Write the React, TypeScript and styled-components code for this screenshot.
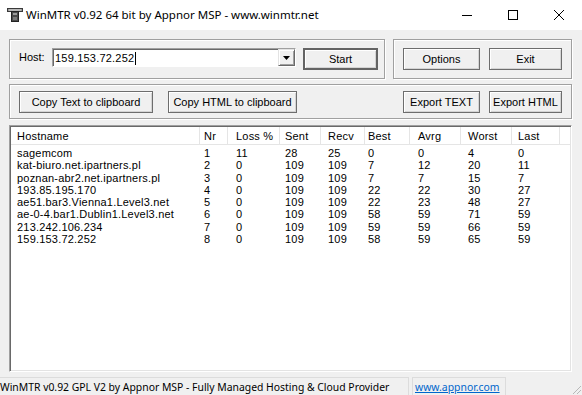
import styled, { createGlobalStyle } from "styled-components";

const GlobalStyle = createGlobalStyle`
  html, body { margin: 0; padding: 0; background: #f0f0f0; }
  * { box-sizing: border-box; }
`;

const columns = [
  { title: "Hostname", width: 189, pad: 6 },
  { title: "Nr", width: 28, pad: 4 },
  { title: "Loss %", width: 52, pad: 8 },
  { title: "Sent", width: 41, pad: 5 },
  { title: "Recv", width: 44, pad: 7 },
  { title: "Best", width: 45, pad: 3 },
  { title: "Avrg", width: 51, pad: 8 },
  { title: "Worst", width: 51, pad: 7 },
  { title: "Last", width: 48, pad: 6 },
];

const hops: (string | number)[][] = [
  ["sagemcom", 1, 11, 28, 25, 0, 0, 4, 0],
  ["kat-biuro.net.ipartners.pl", 2, 0, 109, 109, 7, 12, 20, 11],
  ["poznan-abr2.net.ipartners.pl", 3, 0, 109, 109, 7, 7, 15, 7],
  ["193.85.195.170", 4, 0, 109, 109, 22, 22, 30, 27],
  ["ae51.bar3.Vienna1.Level3.net", 5, 0, 109, 109, 22, 23, 48, 27],
  ["ae-0-4.bar1.Dublin1.Level3.net", 6, 0, 109, 109, 58, 59, 71, 59],
  ["213.242.106.234", 7, 0, 109, 109, 59, 59, 66, 59],
  ["159.153.72.252", 8, 0, 109, 109, 58, 59, 65, 59],
];

const gridCols = columns.map((c) => c.width + "px").join(" ") + " 1fr";

const App = () => {
  return (
    <Window>
      <GlobalStyle />
      <TitleBar>
        <AppIcon width="16" height="16" viewBox="0 0 16 16">
          <rect x="0.5" y="1.5" width="15" height="3" fill="#9a9a9a" stroke="#3a3a3a" />
          <rect x="2" y="2.5" width="12" height="1" fill="#d8d8d8" />
          <rect x="4.5" y="4.5" width="7" height="10" fill="#4a4a4a" stroke="#222" />
          <rect x="6" y="6" width="4" height="2" fill="#9c9c9c" />
          <rect x="6" y="10" width="4" height="3" fill="#7a7a7a" />
        </AppIcon>
        <Title>WinMTR v0.92 64 bit by Appnor MSP - www.winmtr.net</Title>
        <Controls>
          <CtrlButton>
            <svg width="10" height="10" viewBox="0 0 10 10">
              <line x1="0" y1="5.5" x2="10" y2="5.5" stroke="#000" />
            </svg>
          </CtrlButton>
          <CtrlButton>
            <svg width="10" height="10" viewBox="0 0 10 10">
              <rect x="0.5" y="0.5" width="9" height="9" fill="none" stroke="#000" />
            </svg>
          </CtrlButton>
          <CtrlButton>
            <svg width="10" height="10" viewBox="0 0 10 10">
              <path d="M0 0 L10 10 M10 0 L0 10" stroke="#000" strokeWidth="1" />
            </svg>
          </CtrlButton>
        </Controls>
      </TitleBar>

      <Client>
        <TopRow>
          <GroupBox $width={376} $height={40}>
            <Label>Host:</Label>
            <Combo>
              <ComboText>
                159.153.72.252
                <Caret />
              </ComboText>
              <DropButton>
                <svg width="7" height="4" viewBox="0 0 7 4">
                  <path d="M0 0 H7 L3.5 4 Z" fill="#000" />
                </svg>
              </DropButton>
            </Combo>
            <Button $width={75} $default>Start</Button>
          </GroupBox>
          <GroupBox $width={179} $height={40}>
            <Button $width={77}>Options</Button>
            <Button $width={73}>Exit</Button>
          </GroupBox>
        </TopRow>

        <ActionBox>
          <Button $width={134}>Copy Text to clipboard</Button>
          <Button $width={129}>Copy HTML to clipboard</Button>
          <Spacer />
          <Button $width={77}>Export TEXT</Button>
          <Button $width={73}>Export HTML</Button>
        </ActionBox>

        <ListView>
          <HeaderRow>
            {columns.map((c) => (
              <HeaderCell key={c.title} $pad={c.pad}>
                {c.title}
              </HeaderCell>
            ))}
            <HeaderFiller />
          </HeaderRow>
          <Body>
            {hops.map((row) => (
              <Row key={String(row[0])}>
                {row.map((v, i) => (
                  <Cell key={i} $pad={columns[i].pad}>
                    {v}
                  </Cell>
                ))}
              </Row>
            ))}
          </Body>
        </ListView>
      </Client>

      <StatusBar>
        <Pane $width={409}>
          WinMTR v0.92 GPL V2 by Appnor MSP - Fully Managed Hosting &amp; Cloud Provider
        </Pane>
        <Pane $width={94}>
          <Link>www.appnor.com</Link>
        </Pane>
        <Grip width="12" height="12" viewBox="0 0 12 12">
          <path d="M11 3 L3 11 M11 7 L7 11" stroke="#b8b8b8" strokeWidth="1" />
        </Grip>
      </StatusBar>
    </Window>
  );
};

const Window = styled.div`
  width: 582px;
  height: 395px;
  display: flex;
  flex-direction: column;
  background: #f0f0f0;
  overflow: hidden;
  font-family: "Liberation Sans", Arial, sans-serif;
  font-size: 11px;
  color: #000;
`;

const TitleBar = styled.div`
  height: 30px;
  background: #fff;
  display: flex;
  align-items: center;
  padding-left: 7px;
`;

const AppIcon = styled.svg`
  flex: none;
`;

const Title = styled.div`
  margin-left: 3px;
  font-family: "Noto Sans", "Liberation Sans", sans-serif;
  font-size: 11.5px;
  color: #000;
  flex: 1;
  padding-bottom: 1px;
`;

const Controls = styled.div`
  display: flex;
  height: 30px;
`;

const CtrlButton = styled.div`
  width: 46px;
  height: 30px;
  display: flex;
  align-items: center;
  justify-content: center;
`;

const Client = styled.div`
  flex: 1;
  display: flex;
  flex-direction: column;
  padding: 9px 10px 0 9px;
`;

const TopRow = styled.div`
  display: flex;
  gap: 8px;
`;

const GroupBox = styled.div<{ $width: number; $height: number }>`
  width: ${(p) => p.$width}px;
  height: ${(p) => p.$height}px;
  border: 1px solid #a0a0a0;
  box-shadow: inset 1px 1px 0 #fff, 1px 1px 0 #fff;
  display: flex;
  align-items: flex-start;
  gap: 9px;
  padding: 8px 0 0 9px;
`;

const ActionBox = styled.div`
  margin-top: 5px;
  height: 35px;
  border: 1px solid #a0a0a0;
  box-shadow: inset 1px 1px 0 #fff, 1px 1px 0 #fff;
  display: flex;
  align-items: flex-start;
  gap: 15px;
  padding: 6px 9px 0 9px;

  & > button:last-child {
    margin-left: -6px;
  }
`;

const Spacer = styled.div`
  flex: 1;
`;

const Label = styled.div`
  height: 19px;
  line-height: 19px;
  width: 27px;
  margin-right: -3px;
`;

const Combo = styled.div`
  width: 244px;
  height: 19px;
  background: #fff;
  border: 1px solid;
  border-color: #a0a0a0 #fff #fff #a0a0a0;
  box-shadow: inset 1px 1px 0 #696969;
  display: flex;
  margin-right: -2px;
`;

const ComboText = styled.div`
  flex: 1;
  display: flex;
  align-items: center;
  padding-left: 2px;
  padding-top: 1px;
  letter-spacing: 0.2px;
`;

const Caret = styled.span`
  display: inline-block;
  width: 1px;
  height: 13px;
  background: #000;
  margin-left: 1px;
`;

const DropButton = styled.div`
  width: 17px;
  height: 17px;
  background: #f0f0f0;
  border: 1px solid;
  border-color: #e3e3e3 #696969 #696969 #e3e3e3;
  box-shadow: inset 1px 1px 0 #fff, inset -1px -1px 0 #a0a0a0;
  display: flex;
  align-items: center;
  justify-content: center;
`;

const Button = styled.button<{ $width: number; $default?: boolean }>`
  width: ${(p) => p.$width}px;
  height: 22px;
  padding: 0;
  background: #f0f0f0;
  font-family: "Liberation Sans", Arial, sans-serif;
  font-size: 11px;
  color: #000;
  border: ${(p) => (p.$default ? "2px solid #646464" : "1px solid #6d6d6d")};
  box-shadow: inset 1px 1px 0 #fff, inset -1px -1px 0 #d4d4d4;
  flex: none;
`;

const ListView = styled.div`
  margin-top: 6px;
  height: 247px;
  background: #fff;
  border: 1px solid;
  border-color: #a0a0a0 #fff #fff #a0a0a0;
  box-shadow: inset 1px 1px 0 #696969, inset -1px -1px 0 #e3e3e3;
  padding: 1px 1px 0 1px;
  overflow: hidden;
`;

const HeaderRow = styled.div`
  display: grid;
  grid-template-columns: ${gridCols};
  height: 18px;
  border-bottom: 1px solid #e5e5e5;
`;

const HeaderCell = styled.div<{ $pad: number }>`
  border-right: 1px solid #e5e5e5;
  padding-left: ${(p) => p.$pad}px;
  padding-top: 1px;
  line-height: 16px;
  letter-spacing: 0.2px;
  white-space: nowrap;
`;

const HeaderFiller = styled.div``;

const Body = styled.div`
  padding-top: 2px;
`;

const Row = styled.div`
  display: grid;
  grid-template-columns: ${gridCols};
  height: 12.25px;
  line-height: 12px;
`;

const Cell = styled.div<{ $pad: number }>`
  padding-left: ${(p) => p.$pad}px;
  white-space: nowrap;
  letter-spacing: 0.2px;
`;

const StatusBar = styled.div`
  height: 18px;
  margin-top: 5px;
  display: flex;
  align-items: stretch;
  gap: 3px;
  font-family: "Noto Sans", "Liberation Sans", sans-serif;
  font-size: 10.4px;
`;

const Pane = styled.div<{ $width: number }>`
  width: ${(p) => p.$width}px;
  border: 1px solid #dcdcdc;
  border-bottom: none;
  padding-left: 2px;
  padding-top: 2px;
  line-height: 15px;
  white-space: nowrap;
  overflow: hidden;
  &:first-child {
    border-left: none;
    padding-left: 0;
  }
`;

const Link = styled.span`
  color: #0066cc;
  text-decoration: underline;
`;

const Grip = styled.svg`
  margin-left: auto;
  align-self: flex-end;
`;

export default App;
